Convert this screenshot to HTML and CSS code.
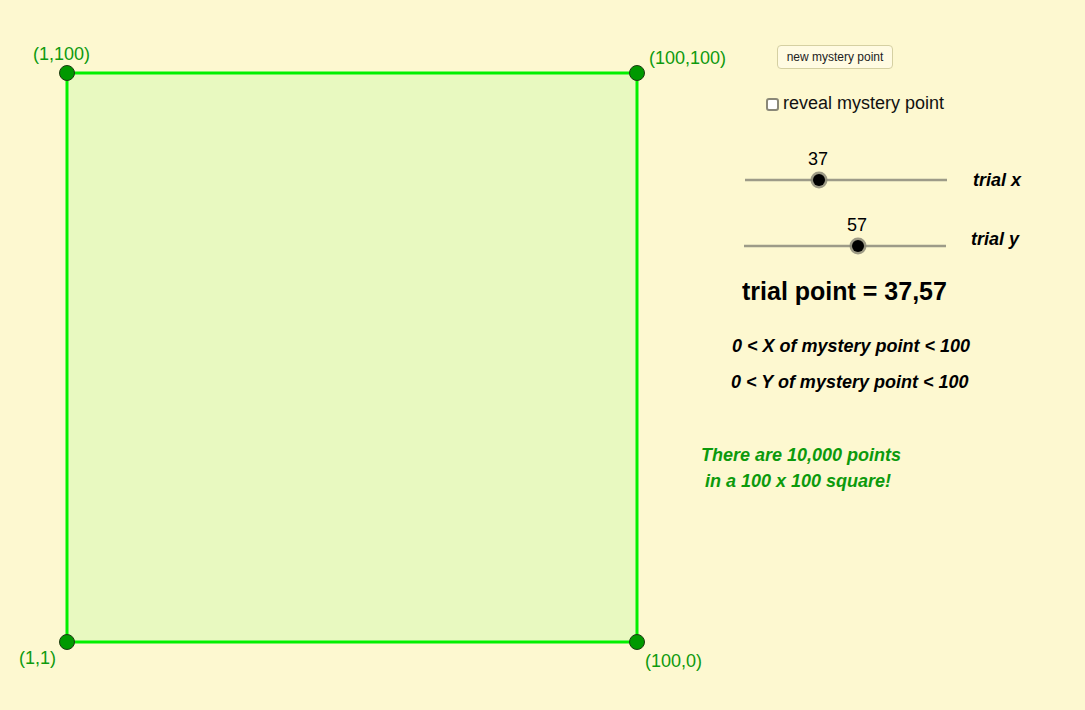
FILE: index.html
```html
<!DOCTYPE html>
<html>
<head>
<meta charset="utf-8">
<link rel="stylesheet" href="styles.css">
</head>
<body>
<div class="applet">
  <svg class="drawing" width="1085" height="710" viewBox="0 0 1085 710">
    <rect x="67" y="73" width="570" height="569" fill="#e8f9c0" stroke="#00f000" stroke-width="3"/>
    <g fill="#009900" stroke="#1e3a12" stroke-width="1">
      <circle cx="67" cy="73" r="7.5"/>
      <circle cx="637" cy="73" r="7.5"/>
      <circle cx="67" cy="642" r="7.5"/>
      <circle cx="637" cy="642" r="7.5"/>
    </g>
    <g stroke="#9d9b88" stroke-width="2.5">
      <line x1="745" y1="180" x2="947" y2="180"/>
      <line x1="744" y1="246" x2="946" y2="246"/>
    </g>
    <g>
      <circle cx="819" cy="180" r="8.5" fill="#8c8a78" opacity="0.85"/>
      <circle cx="819" cy="180" r="6" fill="#000"/>
      <circle cx="858" cy="246" r="8.5" fill="#8c8a78" opacity="0.85"/>
      <circle cx="858" cy="246" r="6" fill="#000"/>
    </g>
  </svg>

  <span class="label pt tl">(1,100)</span>
  <span class="label pt tr">(100,100)</span>
  <span class="label pt bl">(1,1)</span>
  <span class="label pt br">(100,0)</span>

  <button class="btn">new mystery point</button>
  <label class="reveal"><span class="box"></span>reveal mystery point</label>

  <span class="label val v1">37</span>
  <span class="label val v2">57</span>
  <span class="label name n1">trial x</span>
  <span class="label name n2">trial y</span>

  <span class="label trial">trial point = 37,57</span>
  <span class="label range r1">0 &lt; X of mystery point &lt; 100</span>
  <span class="label range r2">0 &lt; Y of mystery point &lt; 100</span>
  <span class="label note g1">There are 10,000 points</span>
  <span class="label note g2">in a 100 x 100 square!</span>
</div>
</body>
</html>
```

FILE: styles.css
```css
html, body {
  margin: 0;
  padding: 0;
  background: #fdf8d0;
}

.applet {
  position: relative;
  width: 1085px;
  height: 710px;
  background: #fdf8d0;
  overflow: hidden;
  font-family: "Liberation Sans", Arial, sans-serif;
}

.drawing {
  position: absolute;
  left: 0;
  top: 0;
}

.label {
  position: absolute;
  font-size: 18px;
  line-height: 18px;
  white-space: nowrap;
  color: #000;
}

.pt { color: #0e9a0e; }
.tl { left: 33px; top: 45px; }
.tr { left: 649px; top: 49px; }
.bl { left: 19px; top: 649px; }
.br { left: 645px; top: 652px; }

.btn {
  position: absolute;
  left: 777px;
  top: 45px;
  width: 116px;
  height: 24px;
  padding: 0;
  font-family: "Liberation Sans", Arial, sans-serif;
  font-size: 12px;
  color: #222;
  background: #fffbe2;
  border: 1px solid #d5d0a2;
  border-radius: 4px;
}

.reveal {
  position: absolute;
  left: 766px;
  top: 94px;
  display: flex;
  align-items: center;
  font-size: 18px;
  line-height: 18px;
  color: #111;
  white-space: nowrap;
}

.box {
  box-sizing: border-box;
  flex: 0 0 13px;
  width: 13px;
  height: 13px;
  margin-top: 2px;
  margin-right: 4px;
  border: 2px solid #8a8878;
  border-radius: 3px;
  background: #fff;
}

.val { width: 30px; text-align: center; }
.v1 { left: 803px; top: 150px; }
.v2 { left: 842px; top: 216px; }

.name { font-weight: bold; font-style: italic; }
.n1 { left: 973px; top: 171px; }
.n2 { left: 971px; top: 230px; }

.trial {
  left: 742px;
  top: 279px;
  font-size: 25px;
  line-height: 25px;
  font-weight: bold;
}

.range { font-weight: bold; font-style: italic; }
.r1 { left: 732px; top: 337px; }
.r2 { left: 731px; top: 373px; }

.note { font-weight: bold; font-style: italic; color: #0c9a0c; }
.g1 { left: 701px; top: 446px; }
.g2 { left: 705px; top: 472px; }
```
